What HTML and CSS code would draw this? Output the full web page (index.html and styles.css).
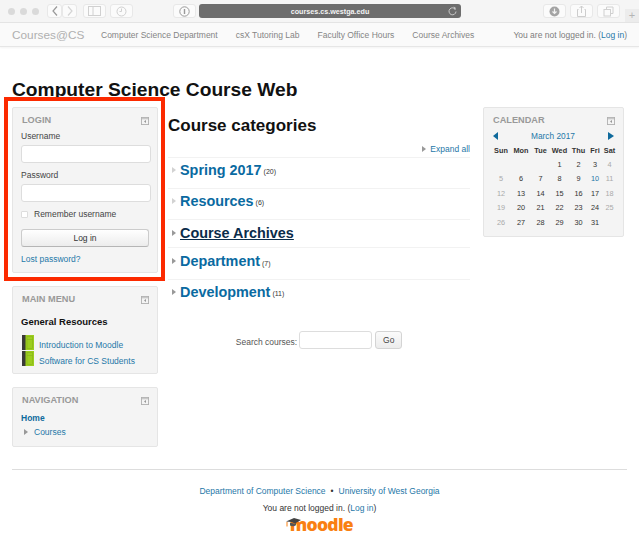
FILE: index.html
```html
<!DOCTYPE html>
<html lang="en">
<head>
<meta charset="utf-8">
<title>Computer Science Course Web</title>
<link rel="stylesheet" href="styles.css">
</head>
<body>
<div class="browser">
  <span class="light"></span><span class="light"></span><span class="light"></span>
  <div class="btn-group">
    <span class="tool tool-s"><svg width="8" height="12" viewBox="0 0 8 12"><path d="M6 1.500 2 6l4 4.500" fill="none" stroke="#999" stroke-width="1.200"/></svg></span>
    <span class="tool tool-s"><svg width="8" height="12" viewBox="0 0 8 12"><path d="M2 1.500 6 6l-4 4.500" fill="none" stroke="#d4d4d4" stroke-width="1.200"/></svg></span>
  </div>
  <span class="tool tool-m gap-a"><svg width="13" height="10" viewBox="0 0 13 10"><rect x=".5" y=".5" width="12" height="9" fill="none" stroke="#d0d0d0"/><path d="M5 .5v9" stroke="#d0d0d0"/></svg></span>
  <span class="tool tool-m gap-b"><svg width="11" height="11" viewBox="0 0 11 11"><circle cx="5.500" cy="5.500" r="4.500" fill="none" stroke="#d0d0d0"/><path d="M5.500 2.500v3H3.500" fill="none" stroke="#d0d0d0"/></svg></span>
  <span class="tool tool-i"><svg width="11" height="11" viewBox="0 0 11 11"><circle cx="5.500" cy="5.500" r="4.700" fill="none" stroke="#999"/><path d="M5.500 3v5" stroke="#999" stroke-width="1.400"/></svg></span>
  <div class="address"><span class="address-text">courses.cs.westga.edu</span><svg class="reload" width="9" height="10" viewBox="0 0 9 10"><path d="M7.500 3.500A3.500 3.500 0 1 0 8 5.500" fill="none" stroke="#c9c9c9"/><path d="M5.500 .5l2.500 1.500-1.500 2z" fill="#c9c9c9"/></svg></div>
  <span class="tool tool-r gap-c"><svg width="11" height="11" viewBox="0 0 11 11"><circle cx="5.500" cy="5.500" r="5" fill="#a4a4a4"/><path d="M5.500 2.500v4M3.500 5.500l2 2 2-2" fill="none" stroke="#f2f2f2" stroke-width="1.200"/></svg></span>
  <span class="tool tool-r"><svg width="9" height="12" viewBox="0 0 9 12"><path d="M1.500 4.500H.5v7h8v-7h-1M4.500 8V1M2.500 3l2-2 2 2" fill="none" stroke="#cdcdcd"/></svg></span>
  <span class="tool tool-r"><svg width="11" height="11" viewBox="0 0 11 11"><rect x="1" y="3.500" width="6.500" height="6.500" fill="none" stroke="#d0d0d0"/><path d="M3.500 3.500V1H10v6.500H7.500" fill="none" stroke="#d0d0d0"/></svg></span>
  <span class="plus">+</span>
</div>

<nav class="navbar">
  <a class="brand">Courses@CS</a>
  <a class="nav-link">Computer Science Department</a>
  <a class="nav-link">csX Tutoring Lab</a>
  <a class="nav-link">Faculty Office Hours</a>
  <a class="nav-link">Course Archives</a>
  <span class="login-info">You are not logged in. (<a class="link">Log in</a>)</span>
</nav>

<main class="page">
  <h1 class="page-title">Computer Science Course Web</h1>
  <div class="columns">
    <aside class="side">
      <section class="block block-login">
        <header class="block-head"><h2>LOGIN</h2><svg class="dock" viewBox="0 0 9 9"><rect x=".5" y=".5" width="8" height="8" fill="#f4f4f4" stroke="#b0b0b0"/><path d="M.5 2h8" stroke="#b0b0b0"/><path d="M5.500 3.500 3.500 5.200l2 1.600z" fill="#8a8a8a"/></svg></header>
        <label class="field-label">Username</label>
        <div class="input"></div>
        <label class="field-label field-second">Password</label>
        <div class="input"></div>
        <div class="remember"><span class="check"></span><span>Remember username</span></div>
        <div class="login-btn">Log in</div>
        <a class="link lost">Lost password?</a>
      </section>

      <section class="block block-menu">
        <header class="block-head"><h2>MAIN MENU</h2><svg class="dock" viewBox="0 0 9 9"><rect x=".5" y=".5" width="8" height="8" fill="#f4f4f4" stroke="#b0b0b0"/><path d="M.5 2h8" stroke="#b0b0b0"/><path d="M5.500 3.500 3.500 5.200l2 1.600z" fill="#8a8a8a"/></svg></header>
        <h3 class="menu-title">General Resources</h3>
        <div class="book-row">
          <svg class="book" viewBox="0 0 12 15"><rect width="4" height="15" fill="#3a3a36"/><rect x="3.500" width="8.500" height="15" fill="#9ccd1e"/><rect x="5" y="1.500" width="5.500" height="12" fill="none" stroke="#86b317" stroke-width=".6"/><path d="M5 4.500h5.500" stroke="#86b317" stroke-width=".6"/></svg>
          <a class="link">Introduction to Moodle</a>
        </div>
        <div class="book-row">
          <svg class="book" viewBox="0 0 12 15"><rect width="4" height="15" fill="#3a3a36"/><rect x="3.500" width="8.500" height="15" fill="#9ccd1e"/><rect x="5" y="1.500" width="5.500" height="12" fill="none" stroke="#86b317" stroke-width=".6"/><path d="M5 4.500h5.500" stroke="#86b317" stroke-width=".6"/></svg>
          <a class="link">Software for CS Students</a>
        </div>
      </section>

      <section class="block block-nav">
        <header class="block-head"><h2>NAVIGATION</h2><svg class="dock" viewBox="0 0 9 9"><rect x=".5" y=".5" width="8" height="8" fill="#f4f4f4" stroke="#b0b0b0"/><path d="M.5 2h8" stroke="#b0b0b0"/><path d="M5.500 3.500 3.500 5.200l2 1.600z" fill="#8a8a8a"/></svg></header>
        <a class="link home">Home</a>
        <div class="nav-courses"><span class="tri-solid"></span><a class="link">Courses</a></div>
      </section>
    </aside>

    <section class="content">
      <h2 class="content-title">Course categories</h2>
      <div class="expand"><span class="tri-solid"></span><a class="link">Expand all</a></div>
      <ul class="cats">
        <li class="cat cat-a"><span class="tri-open"></span><a class="cat-name">Spring 2017</a><small>(20)</small></li>
        <li class="cat cat-b"><span class="tri-open"></span><a class="cat-name">Resources</a><small>(6)</small></li>
        <li class="cat cat-c"><span class="tri-solid"></span><a class="cat-name active">Course Archives</a></li>
        <li class="cat cat-d"><span class="tri-solid"></span><a class="cat-name">Department</a><small>(7)</small></li>
        <li class="cat cat-e"><span class="tri-solid"></span><a class="cat-name">Development</a><small>(11)</small></li>
      </ul>
      <div class="search"><span class="search-label">Search courses:</span><div class="search-input"></div><div class="go">Go</div></div>
    </section>

    <aside class="block block-cal">
      <header class="block-head"><h2>CALENDAR</h2><svg class="dock" viewBox="0 0 9 9"><rect x=".5" y=".5" width="8" height="8" fill="#f4f4f4" stroke="#b0b0b0"/><path d="M.5 2h8" stroke="#b0b0b0"/><path d="M5.500 3.500 3.500 5.200l2 1.600z" fill="#8a8a8a"/></svg></header>
      <div class="cal-month"><span class="arrow-l"></span><a class="link">March 2017</a><span class="arrow-r"></span></div>
      <div class="cal-grid">
        <b>Sun</b><b>Mon</b><b>Tue</b><b>Wed</b><b>Thu</b><b>Fri</b><b>Sat</b>
        <i></i><i></i><i></i><i>1</i><i>2</i><i>3</i><i class="we">4</i>
        <i class="we">5</i><i>6</i><i>7</i><i>8</i><i>9</i><i class="today">10</i><i class="we">11</i>
        <i class="we">12</i><i>13</i><i>14</i><i>15</i><i>16</i><i>17</i><i class="we">18</i>
        <i class="we">19</i><i>20</i><i>21</i><i>22</i><i>23</i><i>24</i><i class="we">25</i>
        <i class="we">26</i><i>27</i><i>28</i><i>29</i><i>30</i><i>31</i><i></i>
      </div>
    </aside>
  </div>

  <footer class="footer">
    <div class="foot-links"><a class="link">Department of Computer Science</a><span class="dot">•</span><a class="link">University of West Georgia</a></div>
    <div class="foot-login">You are not logged in. (<a class="link">Log in</a>)</div>
    <div class="logo"><span class="logo-text">moodle</span><svg class="cap" width="15" height="10" viewBox="0 0 15 10"><path d="M0 3.500 8 0l7 2-6 3.500-3.500-1.500z" fill="#444"/><path d="M4 4.500v3c2 1 4 1 6-.3V4.800l-1.500 1z" fill="#555"/><path d="M1 4v4.500" stroke="#f98012"/></svg></div>
  </footer>
</main>

<div class="highlight"></div>
</body>
</html>
```

FILE: styles.css
```css
* { box-sizing: border-box; }
html, body { margin: 0; padding: 0; }
body {
  position: relative;
  width: 639px;
  height: 542px;
  overflow: hidden;
  background: #fff;
  font-family: "Liberation Sans", Arial, sans-serif;
  font-size: 8.500px;
  color: #333;
}
a { text-decoration: none; }
.link { color: #1f78a8; }

.browser {
  display: flex;
  align-items: center;
  height: 23px;
  padding: 0 0 0 8px;
  background: #f5f5f5;
  border-bottom: 1px solid #e4e4e4;
}
.light { width: 7px; height: 7px; border-radius: 50%; background: #dadada; margin-right: 5px; flex: none; }
.btn-group { display: flex; margin-left: 3px; }
.tool {
  display: flex; align-items: center; justify-content: center; flex: none;
  height: 14px; background: #fbfbfb; border: 1px solid #e8e8e8; border-radius: 3px;
}
.tool-s { width: 15px; }
.tool-m { width: 23px; }
.gap-a { margin-left: 6px; }
.gap-b { margin-left: 4px; }
.tool-i { width: 23px; margin-left: 40px; }
.address {
  position: relative; flex: none;
  width: 262px; height: 14px; margin-left: 3px;
  background: #6d6d6d; border-radius: 3px;
  display: flex; align-items: center; justify-content: center;
}
.address-text { color: #f4f4f4; font-size: 7.200px; font-weight: 700; }
.reload { position: absolute; right: 4px; top: 2px; }
.tool-r { width: 23px; margin-right: 4px; }
.gap-c { margin-left: 82px; }
.plus {
  flex: none; width: 14px; height: 13px; margin-top: 9px; margin-left: 1px;
  background: #ececec; color: #b5b5b5; font-size: 11px; line-height: 13px; text-align: center;
}

.navbar {
  display: flex;
  align-items: center;
  height: 24px;
  padding-left: 12px;
  white-space: nowrap;
  background: #fafafa;
  border-bottom: 1px solid #e6e6e6;
  box-shadow: 0 1px 2px rgba(0,0,0,.05);
  color: #777;
}
.brand { font-size: 11.800px; color: #b0b0b0; width: 89px; flex: none; }
.nav-link { color: #858585; margin-right: 18px; }
.login-info { margin-left: auto; margin-right: 12px; color: #7d7d7d; }

.page { padding: 30px 12px 0; }
.page-title { margin: 0; font-size: 19.200px; line-height: 26px; font-weight: 700; color: #111; height: 30px; }
.columns { display: grid; grid-template-columns: 146px 302px 144px; column-gap: 10px; align-items: start; }
.columns > .block-cal { margin-left: 3px; }

.block {
  background: #f4f4f4;
  border: 1px solid #e5e5e5;
  border-radius: 2px;
  padding: 7px 8px 6px;
}
.block-head { display: flex; justify-content: space-between; align-items: center; height: 10px; }
.block-head h2 { margin: 0 0 0 1px; font-size: 9.200px; font-weight: 700; color: #999; }
.dock { width: 8px; height: 8px; margin-top: 2px; flex: none; }

.side { display: flex; flex-direction: column; gap: 13px; }
.block-login { height: 166px; }
.field-label { display: block; line-height: 11px; color: #444; margin-top: 6px; }
.field-second { margin-top: 7px; }
.input { height: 18px; margin-top: 3px; background: #fff; border: 1px solid #ddd; border-radius: 3px; width: 130px; }
.remember { display: flex; align-items: center; margin-top: 7px; line-height: 11px; color: #444; }
.check { width: 7px; height: 7px; background: #fff; border: 1px solid #ddd; border-radius: 1px; margin-right: 6px; }
.login-btn {
  width: 128px; height: 18px; margin-top: 9px;
  background: linear-gradient(#fff, #ececec);
  border: 1px solid #ccc; border-bottom-color: #b5b5b5; border-radius: 3px;
  text-align: center; line-height: 16px; color: #333;
}
.lost { display: block; margin-top: 7px; line-height: 11px; }

.block-menu { height: 88px; }
.menu-title { margin: 12px 0 7px; font-size: 9.500px; line-height: 12px; color: #111; }
.book-row { display: flex; align-items: flex-start; height: 16px; padding-left: 1px; }
.book { width: 12px; height: 15px; margin-right: 5px; flex: none; }
.book-row .link { margin-top: 5px; line-height: 11px; }

.block-nav { height: 60px; }
.home { display: block; font-weight: 700; color: #0f6a9c; margin-top: 7px; line-height: 12px; }
.nav-courses { display: flex; align-items: center; margin-top: 2px; line-height: 12px; padding-left: 3px; }
.nav-courses .tri-solid { margin-right: 6px; }

.tri-solid, .tri-open { display: inline-block; width: 0; height: 0; border-style: solid; border-width: 3.500px 0 3.500px 4px; border-color: transparent transparent transparent #999; flex: none; }
.tri-open { border-left-color: #d2d2d2; }

.content-title { margin: 8px 0 0; font-size: 17px; line-height: 22px; color: #111; font-weight: 700; }
.expand { display: flex; justify-content: flex-end; align-items: center; margin-top: 6px; height: 11px; }
.expand .tri-solid { margin-right: 4px; }
.cats { list-style: none; margin: 3px 0 0; padding: 0; }
.cat { display: flex; align-items: center; padding: 0 0 7px 4px; border-top: 1px solid #f2f2f2; }
.cat .tri-solid, .cat .tri-open { margin-right: 4px; }
.cat-a { height: 31px; }
.cat-b { height: 31px; }
.cat-c { height: 28px; padding-bottom: 2px; }
.cat-d { height: 32px; padding-bottom: 5px; }
.cat-e { height: 26px; padding-bottom: 2px; }
.cat-name { font-size: 14.400px; font-weight: 700; color: #0a6aa1; }
.cat-name.active { color: #0a2c4a; text-decoration: underline; }
.cat small { font-size: 7px; color: #333; margin-left: 2px; margin-top: 4px; }

.search { display: flex; align-items: center; justify-content: center; margin-top: 26px; color: #555; }
.search-label { padding-top: 3px; }
.search-input { width: 73px; height: 18px; margin: 0 3px 0 2px; background: #fff; border: 1px solid #ddd; border-radius: 3px; }
.go { width: 27px; height: 18px; background: linear-gradient(#fbfbfb,#ececec); border: 1px solid #d4d4d4; border-radius: 3px; text-align: center; line-height: 16px; color: #444; }

.block-cal { height: 130px; }
.cal-month { display: flex; align-items: center; justify-content: space-between; margin-top: 5px; height: 12px; padding: 0 1px; font-size: 8.300px; }
.arrow-l { width: 0; height: 0; border-style: solid; border-width: 4px 5px 4px 0; border-color: transparent #0f6a9c transparent transparent; }
.arrow-r { width: 0; height: 0; border-style: solid; border-width: 4px 0 4px 6px; border-color: transparent transparent transparent #0f6a9c; }
.cal-grid {
  display: grid;
  grid-template-columns: 20px 20px 19px 19px 19px 14px 15px;
  grid-template-rows: 13px;
  grid-auto-rows: 14.400px;
  width: 126px;
  margin: 3px 0 0 -1px;
  font-size: 7.300px;
  text-align: center;
}
.cal-grid b { font-weight: 700; color: #333; line-height: 11px; }
.cal-grid i { font-style: normal; color: #333; line-height: 14.400px; }
.cal-grid .we { color: #aaa; }
.cal-grid .today { color: #1f78a8; }

.footer { margin-top: 22px; border-top: 1px solid #ddd; text-align: center; }
.foot-links { margin-top: 16px; line-height: 11px; }
.dot { margin: 0 5px; color: #333; }
.foot-login { margin-top: 6px; line-height: 11px; color: #333; }
.logo { position: relative; width: 67px; height: 18px; margin: 1px auto 0; text-align: right; }
.cap { position: absolute; left: 0; top: 3px; }
.logo-text { font-family: "Open Sans", sans-serif; font-size: 17.500px; font-weight: 800; color: #f98012; line-height: 18px; letter-spacing: -.7px; }

.highlight {
  position: absolute;
  left: 4px; top: 97px;
  width: 161px; height: 184px;
  border: 4px solid #fc2a00;
  pointer-events: none;
}
```
